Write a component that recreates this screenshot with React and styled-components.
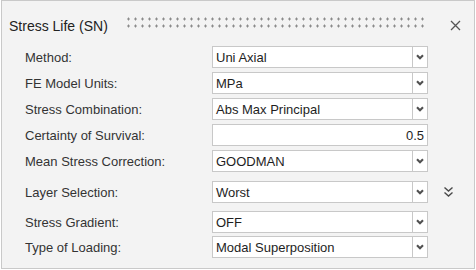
import React from "react";
import styled, { createGlobalStyle } from "styled-components";

const GlobalStyle = createGlobalStyle`
  html, body {
    margin: 0;
    padding: 0;
    background: #ffffff;
  }
  body {
    font-family: "Liberation Sans", Arial, sans-serif;
  }
`;

const Panel = styled.div`
  box-sizing: border-box;
  width: 474px;
  height: 269px;
  margin-left: 1px;
  background: #f3f3f3;
  border: 1px solid #c9c9c9;
  display: flex;
  flex-direction: column;
`;

const Header = styled.div`
  box-sizing: border-box;
  height: 43px;
  padding: 7px 0 0 7px;
  display: flex;
  align-items: center;
`;

const Title = styled.div`
  font-size: 14px;
  color: #222;
  white-space: nowrap;
`;

const Grip = styled.div`
  flex: 1;
  height: 14px;
  margin: 0 12px 4px 17px;
  background-image: radial-gradient(circle, #8a8a8a 1px, transparent 1.2px);
  background-size: 7px 7px;
  background-position: 0 -1.5px;
`;

const CloseBtn = styled.div`
  width: 30px;
  height: 20px;
  display: flex;
  align-items: center;
  justify-content: center;
  margin: 0 4px 2px 0;
`;

const Form = styled.div`
  display: flex;
  flex-direction: column;
  padding-left: 23px;
`;

const Row = styled.div`
  display: grid;
  grid-template-columns: 187px 216px 32px;
  align-items: center;
  height: 26px;
  margin-top: ${(p) => p.$shift || 0}px;
`;

const Label = styled.div`
  font-size: 13px;
  color: #333;
  white-space: nowrap;
`;

const Box = styled.div`
  box-sizing: border-box;
  height: 22px;
  background: #fff;
  border: 1px solid #c8c8c8;
  display: flex;
  align-items: center;
`;

const Value = styled.div`
  flex: 1;
  font-size: 13px;
  color: #1e1e1e;
  padding: 0 3px;
  text-align: ${(p) => (p.$right ? "right" : "left")};
  white-space: nowrap;
  overflow: hidden;
`;

const DropBtn = styled.div`
  width: 14px;
  height: 100%;
  border-left: 1px solid #c8c8c8;
  display: flex;
  align-items: center;
  justify-content: center;
`;

const Side = styled.div`
  display: flex;
  align-items: center;
  padding-left: 15px;
`;

const Chevron = () => (
  <svg width="8" height="6" viewBox="0 0 8 6">
    <path d="M1 1.2 L4 4.2 L7 1.2" fill="none" stroke="#505050" strokeWidth="2.1" />
  </svg>
);

const DoubleChevron = () => (
  <svg width="11" height="12" viewBox="0 0 11 12">
    <path d="M1.5 1.5 L5.5 5 L9.5 1.5" fill="none" stroke="#4a4a4a" strokeWidth="1.4" />
    <path d="M1.5 6.5 L5.5 10 L9.5 6.5" fill="none" stroke="#4a4a4a" strokeWidth="1.4" />
  </svg>
);

const rows = [
  { label: "Method:", value: "Uni Axial" },
  { label: "FE Model Units:", value: "MPa" },
  { label: "Stress Combination:", value: "Abs Max Principal" },
  { label: "Certainty of Survival:", value: "0.5", input: true },
  { label: "Mean Stress Correction:", value: "GOODMAN" },
  { label: "Layer Selection:", value: "Worst", shift: 5, more: true },
  { label: "Stress Gradient:", value: "OFF", shift: 4 },
  { label: "Type of Loading:", value: "Modal Superposition", shift: -1 },
];

export default function App() {
  return (
    <>
      <GlobalStyle />
      <Panel>
        <Header>
          <Title>Stress Life (SN)</Title>
          <Grip />
          <CloseBtn>
            <svg width="11" height="11" viewBox="0 0 11 11">
              <path d="M1 1 L10 10 M10 1 L1 10" stroke="#555" strokeWidth="1.3" />
            </svg>
          </CloseBtn>
        </Header>
        <Form>
          {rows.map((r) => (
            <Row key={r.label} $shift={r.shift}>
              <Label>{r.label}</Label>
              <Box>
                <Value $right={r.input}>{r.value}</Value>
                {!r.input && (
                  <DropBtn>
                    <Chevron />
                  </DropBtn>
                )}
              </Box>
              <Side>{r.more && <DoubleChevron />}</Side>
            </Row>
          ))}
        </Form>
      </Panel>
    </>
  );
}
